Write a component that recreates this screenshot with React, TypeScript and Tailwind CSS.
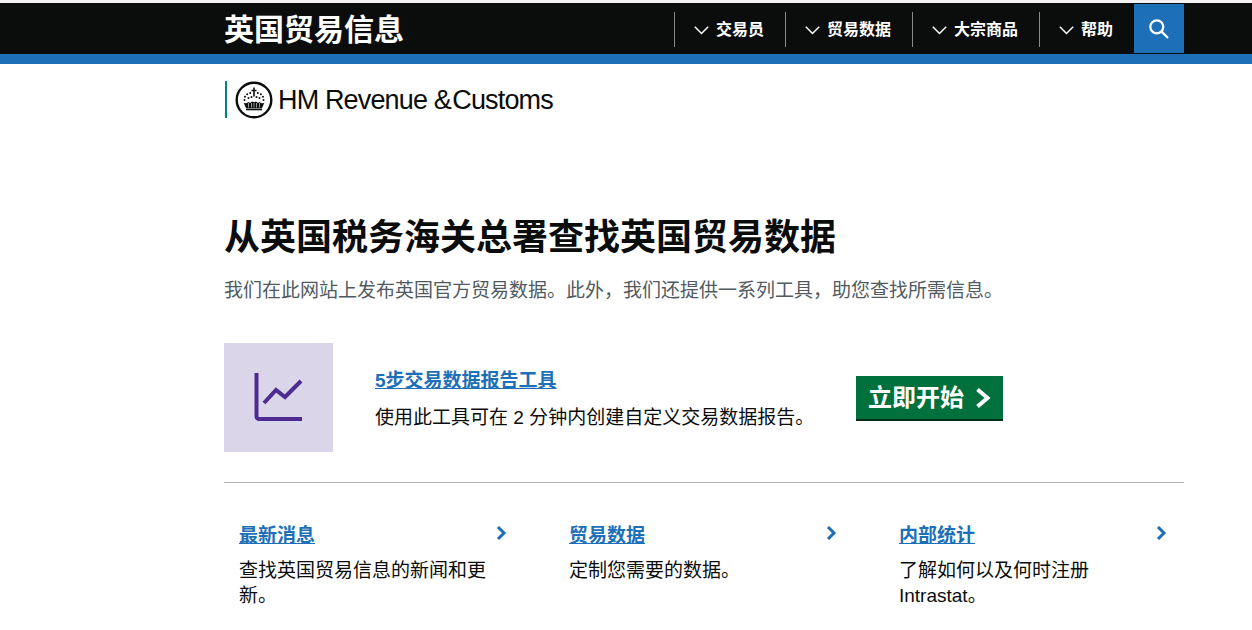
const cjk = "font-['Liberation_Sans','Noto_Sans_CJK_SC',sans-serif]";

const navItems = [
  { label: "交易员", width: "w-[111px]" },
  { label: "贸易数据", width: "w-[127px]" },
  { label: "大宗商品", width: "w-[127px]" },
  { label: "帮助", width: "w-[95px]" },
];

const cards = [
  { title: "最新消息", text: "查找英国贸易信息的新闻和更新。" },
  { title: "贸易数据", text: "定制您需要的数据。" },
  { title: "内部统计", text: "了解如何以及何时注册 Intrastat。" },
];

const crownDots = [
  [9.5, 19], [10, 15.8], [12.2, 13.2], [15.2, 12],
  [28.5, 19], [28, 15.8], [25.8, 13.2], [22.8, 12],
  [13.5, 17], [24.5, 17], [16.5, 16], [21.5, 16],
];

function CrownLogo() {
  return (
    <svg width="38" height="38" viewBox="0 0 38 38" fill="none" className="shrink-0">
      <circle cx="19" cy="19" r="17.3" stroke="#0b0c0c" strokeWidth="2.4" />
      <path d="M19 6.500v9M16.500 9.500h5" stroke="#0b0c0c" strokeWidth="1.6" />
      <path d="M8.500 21.500c1.500 1 2.500 1 3.500.5l1.500-1 1.500 1 2-1.500 2 .8 2-.8 2 1.500 1.500-1 1.500 1c1 .5 2 .5 3.500-.5l-2.500 5.500H11z" fill="#0b0c0c" />
      <path d="M13.500 22v4.500M16.500 22v4.500M19 22v4.500M21.500 22v4.500M24.500 22v4.500" stroke="white" strokeWidth=".6" />
      <rect x="11" y="27.500" width="16" height="1.800" fill="#0b0c0c" />
      {crownDots.map(([cx, cy]) => (
        <circle key={`${cx}-${cy}`} cx={cx} cy={cy} r="1" fill="#0b0c0c" />
      ))}
    </svg>
  );
}

export default function App() {
  return (
    <div className={`${cjk} bg-white text-[#0b0c0c] h-[630px] overflow-hidden`}>
      <div className="h-[3px] bg-[#f3f2f1]" />
      <header className="bg-[#0b0c0c] border-b-[10px] border-[#1d70b8]">
        <div className="w-[960px] ml-[224px] h-[51px] flex items-center justify-between">
          <a className="text-[30px] font-bold text-white leading-none pt-[3px]">英国贸易信息</a>
          <div className="flex items-center h-full">
            {navItems.map((item) => (
              <div key={item.label} className={`${item.width} h-[35px] mt-[1px] flex items-center pl-[19px] gap-[7px] border-l border-[#8a8a8a] text-white text-[16px] font-bold`}>
                <svg width="15" height="9" viewBox="0 0 15 9" fill="none" stroke="currentColor" strokeWidth="1.5" className="mt-[2px]">
                  <path d="M.8.8l6.700 6.700L14.200.8" />
                </svg>
                <span className="pt-[2px]">{item.label}</span>
              </div>
            ))}
            <div className="w-[50px] h-[49px] bg-[#1d70b8] flex items-center justify-center">
              <svg width="20" height="20" viewBox="0 0 20 20" fill="none" stroke="white" strokeWidth="2.2">
                <circle cx="7.800" cy="7.800" r="6.500" />
                <path d="M12.600 12.600l6.400 6.400" />
              </svg>
            </div>
          </div>
        </div>
      </header>

      <main className="w-[960px] ml-[224px]">
        <div className="mt-[17px] ml-[1px] h-[37px] border-l-2 border-[#00847d] pl-[8px] flex items-center gap-[5px]">
          <CrownLogo />
          <span className="text-[27px] tracking-[-0.85px] whitespace-nowrap pt-[2px]">
            HM Revenue &amp;{"\u200a"}Customs
          </span>
        </div>

        <h1 className="mt-[98px] text-[36px] leading-[44px] font-bold">从英国税务海关总署查找英国贸易数据</h1>
        <p className="mt-[18px] text-[19px] leading-[25px] text-[#505a5f]">
          我们在此网站上发布英国官方贸易数据。此外，我们还提供一系列工具，助您查找所需信息。
        </p>

        <section className="mt-[40px] flex items-center">
          <div className="w-[109px] h-[109px] bg-[#dbd5e9] flex items-center justify-center">
            <svg width="50" height="50" viewBox="0 0 50 50" fill="none" stroke="#4c2c92" strokeWidth="4">
              <path d="M2.500 0v43.500a2.500 2.500 0 0 0 2.500 2.500H48" />
              <path d="M10 30l12-13 9 7 16-16" />
            </svg>
          </div>
          <div className="ml-[42px] w-[481px] pt-[2px]">
            <a className="text-[#1d70b8] text-[19px] font-bold underline leading-[26px] block">5步交易数据报告工具</a>
            <p className="mt-[11px] text-[19px] leading-[25px]">使用此工具可在 2 分钟内创建自定义交易数据报告。</p>
          </div>
          <a className="bg-[#00703c] text-white text-[24px] font-bold h-[43px] w-[147px] flex items-center pl-[12px] gap-[10px] shadow-[0_2px_0_#002d18]">
            立即开始
            <svg width="18" height="20" viewBox="0 0 18 20" fill="none" stroke="currentColor" strokeWidth="4">
              <path d="M3.500 1.500L13.500 10 3.500 18.500" />
            </svg>
          </a>
        </section>

        <hr className="mt-[30px] border-0 border-t border-[#b1b4b6]" />

        <section className="grid grid-cols-3 gap-[30px] mt-[37px]">
          {cards.map((card) => (
            <div key={card.title} className="px-[15px]">
              <div className="flex items-start justify-between">
                <a className="text-[#1d70b8] text-[19px] font-bold underline leading-[32px]">{card.title}</a>
                <svg width="11" height="14" viewBox="0 0 11 14" fill="none" stroke="#1d70b8" strokeWidth="3" className="mt-[6px] mr-[2px]">
                  <path d="M2 1l6 6-6 6" />
                </svg>
              </div>
              <p className="mt-[6px] text-[19px] leading-[25px] w-[250px]">{card.text}</p>
            </div>
          ))}
        </section>
      </main>
    </div>
  );
}
